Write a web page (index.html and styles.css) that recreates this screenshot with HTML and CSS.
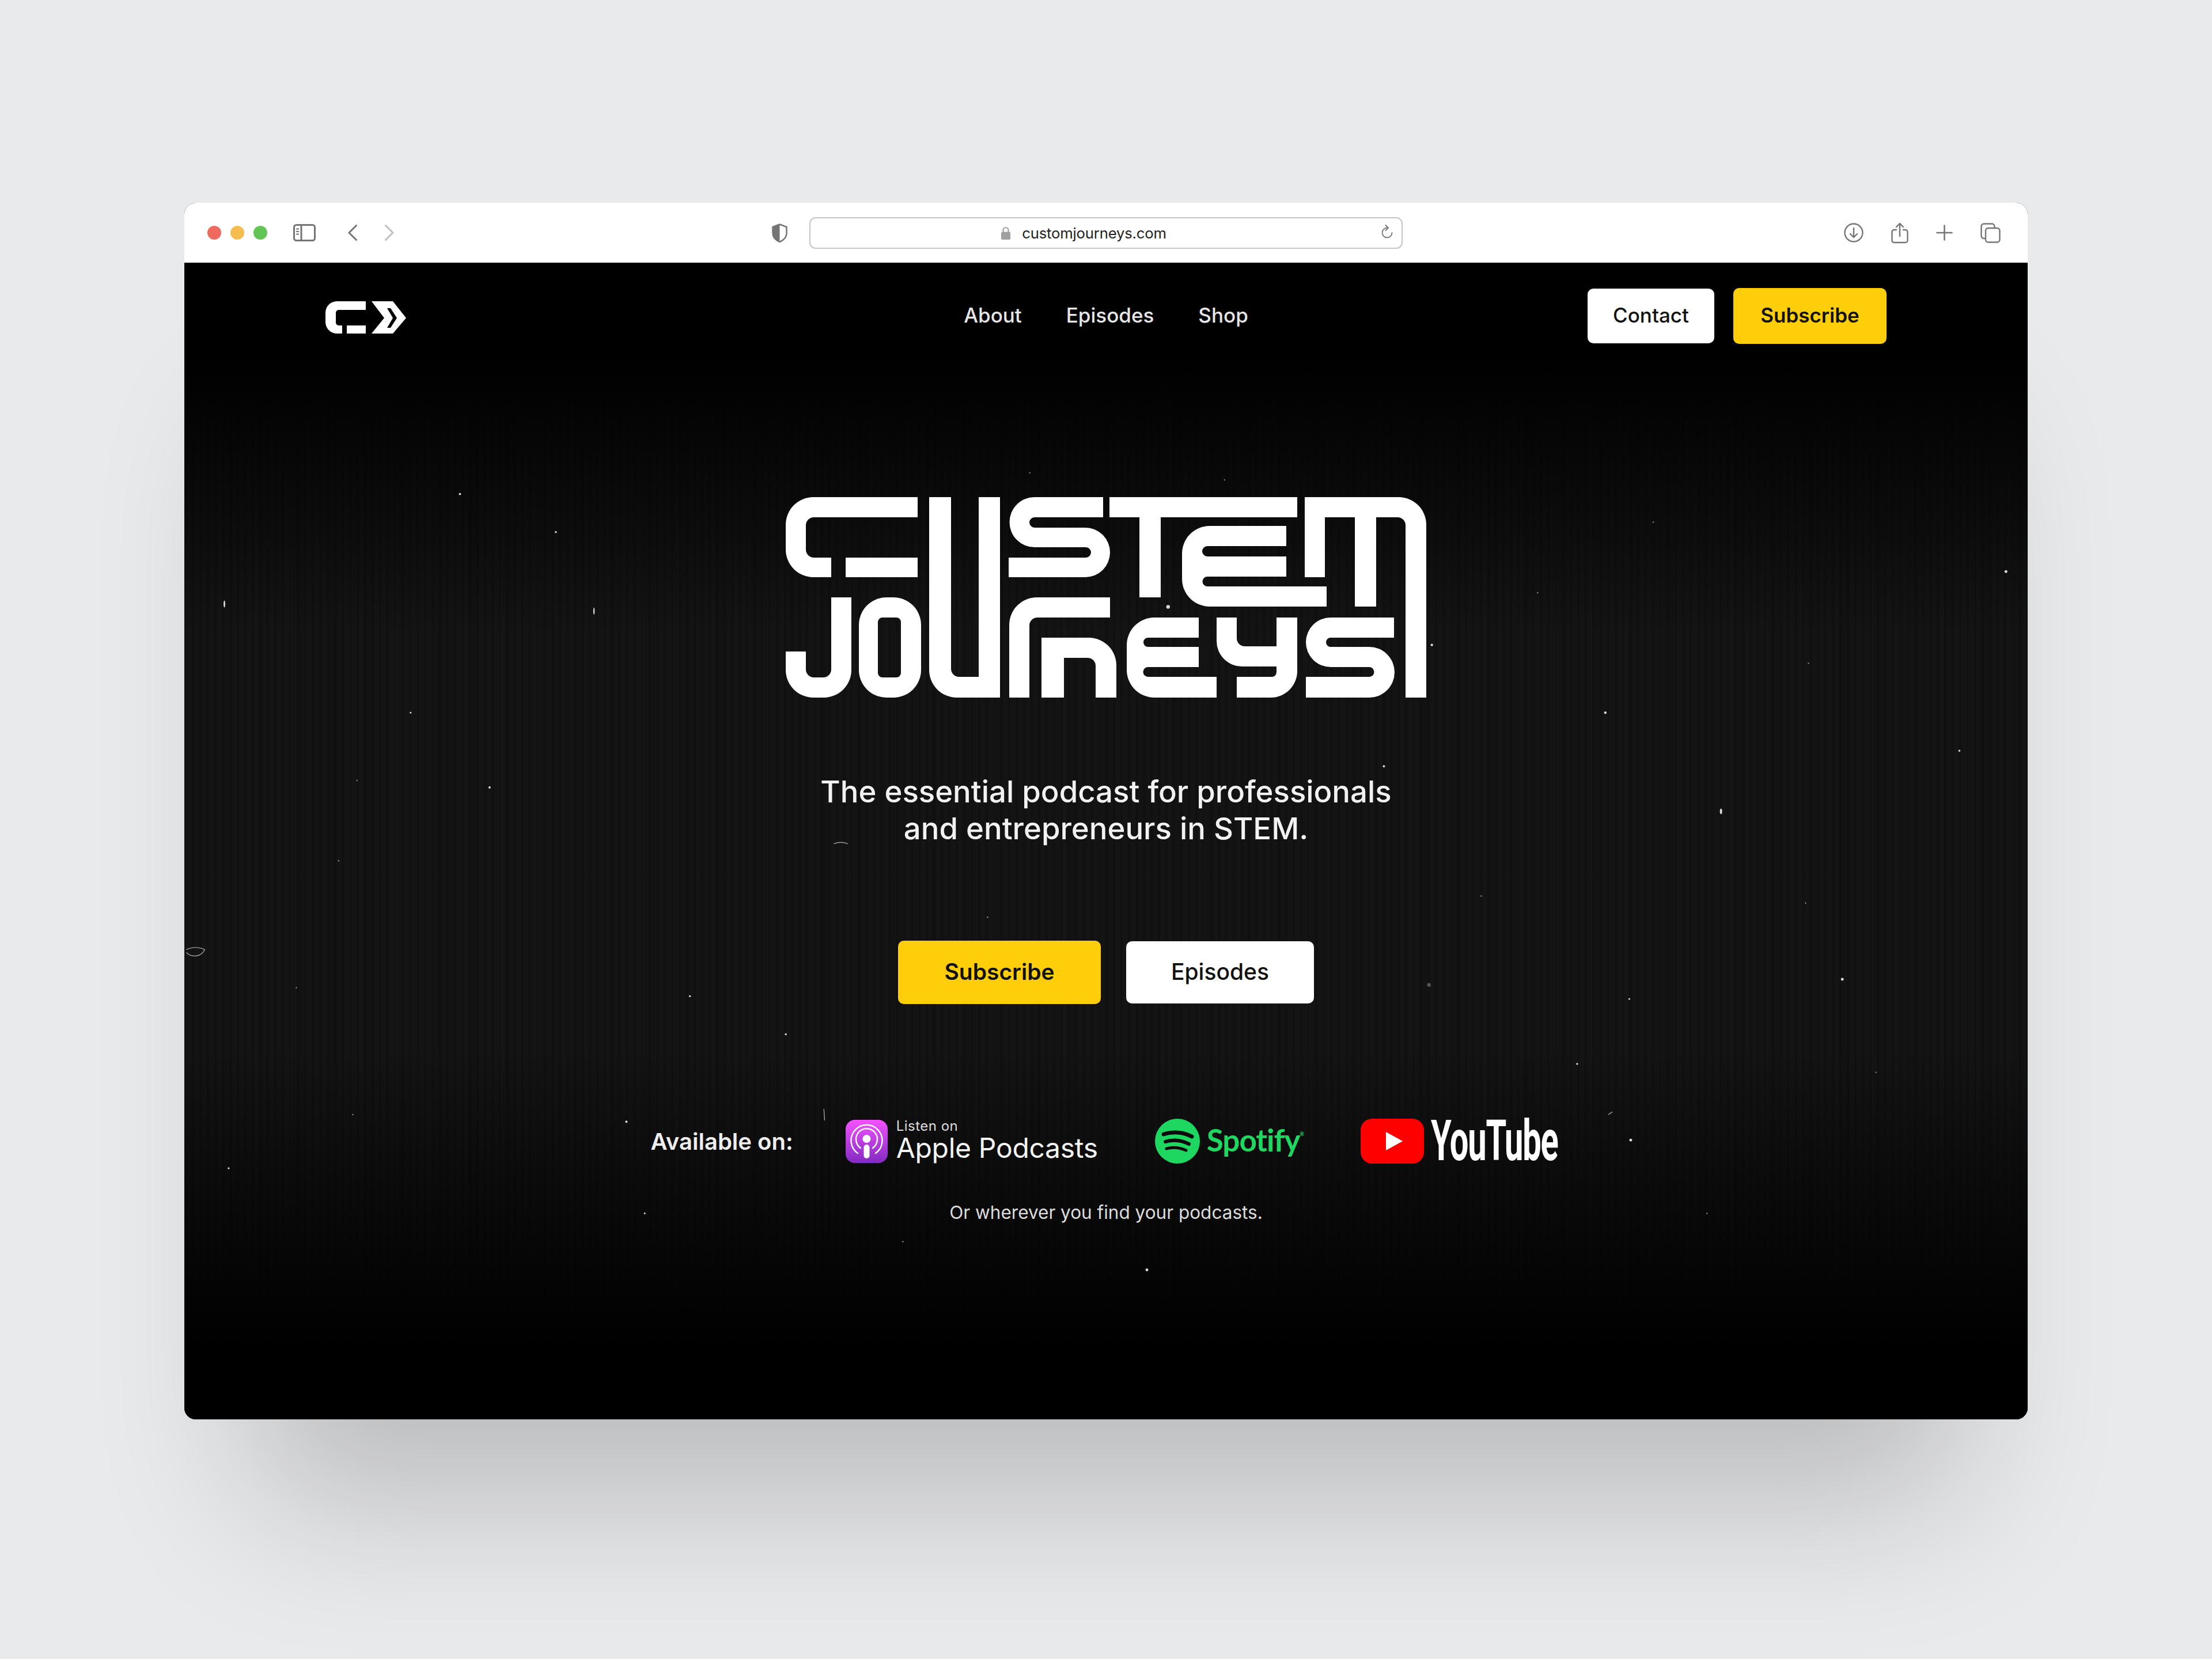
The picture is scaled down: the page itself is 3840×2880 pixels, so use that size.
FILE: index.html
```html
<!DOCTYPE html>
<html lang="en">
<head>
  <meta charset="UTF-8">
  <title>Custom Journeys</title>
  <link rel="stylesheet" href="styles.css">
</head>
<body>
  <div class="window">
    <div class="toolbar">
      <div class="toolbar-left">
        <span class="light red"></span>
        <span class="light yellow"></span>
        <span class="light green"></span>
        <svg class="icon-sidebar" width="39" height="30" viewBox="0 0 39 30" fill="none" stroke="#757575" stroke-width="3">
          <rect x="1.5" y="1.5" width="36" height="27" rx="4"/>
          <path d="M14 2v26"/>
          <path d="M5 8.500h5M5 13h5M5 17.500h5" stroke-width="2"/>
        </svg>
        <svg class="icon-back" width="16" height="28" viewBox="0 0 16 28" fill="none" stroke="#757575" stroke-width="3" stroke-linecap="round" stroke-linejoin="round">
          <path d="M14.500 1.500L2 14l12.500 12.500"/>
        </svg>
        <svg class="icon-forward" width="16" height="28" viewBox="0 0 16 28" fill="none" stroke="#c0c0c0" stroke-width="3" stroke-linecap="round" stroke-linejoin="round">
          <path d="M1.500 1.500L14 14 1.500 26.500"/>
        </svg>
        <svg class="icon-shield" width="27" height="33" viewBox="0 0 27 33">
          <path d="M13.500 1.500L25.500 6v11c0 7-5.500 12-12 15C7 29 1.500 24 1.500 17V6z" fill="#fff" stroke="#757575" stroke-width="2.500" stroke-linejoin="round"/>
          <path d="M13.500 1.500L1.500 6v11c0 7 5.500 12 12 15z" fill="#757575"/>
        </svg>
      </div>
      <div class="address">
        <svg width="18" height="23" viewBox="0 0 18 23" fill="none">
          <path d="M4.500 10V6.500a4.500 4.500 0 0 1 9 0V10" stroke="#a0a0a0" stroke-width="2.200"/>
          <rect x="1" y="9.500" width="16" height="13.500" rx="2" fill="#a0a0a0"/>
        </svg>
        <span class="url">customjourneys.com</span>
        <svg class="icon-reload" width="20" height="26" viewBox="0 0 20 26" fill="none" stroke="#757575" stroke-width="1.800" stroke-linecap="round" stroke-linejoin="round">
          <path d="M11 5.500a8.500 8.500 0 1 0 7.500 8.500"/>
          <path d="M7.500 1L12 5.500 7.500 10"/>
        </svg>
      </div>
      <div class="toolbar-right">
        <svg width="34" height="34" viewBox="0 0 34 34" fill="none" stroke="#757575" stroke-width="2.400" stroke-linecap="round" stroke-linejoin="round">
          <circle cx="17" cy="17" r="15.500"/>
          <path d="M17 9v16M11 19l6 6 6-6"/>
        </svg>
        <svg width="30" height="37" viewBox="0 0 30 37" fill="none" stroke="#757575" stroke-width="2.400" stroke-linecap="round" stroke-linejoin="round">
          <path d="M9 13H5a3.500 3.500 0 0 0-3.500 3.500v15A3.500 3.500 0 0 0 5 35h20a3.500 3.500 0 0 0 3.500-3.500v-15A3.500 3.500 0 0 0 25 13h-4"/>
          <path d="M15 24V2M9 8l6-6 6 6"/>
        </svg>
        <svg width="29" height="28" viewBox="0 0 29 28" fill="none" stroke="#757575" stroke-width="2.600" stroke-linecap="round">
          <path d="M14.500 1.500v25M1.500 14h26"/>
        </svg>
        <svg width="35" height="35" viewBox="0 0 35 35" fill="none" stroke="#757575" stroke-width="2.400">
          <path d="M9 27H6a4.500 4.500 0 0 1-4.500-4.500V6A4.500 4.500 0 0 1 6 1.500h14A4.500 4.500 0 0 1 24.500 6v3"/>
          <rect x="9" y="9" width="24.500" height="24.500" rx="4.500"/>
        </svg>
      </div>
    </div>

    <div class="page">
      <svg class="dust" viewBox="130.600 186 1306.800 820" preserveAspectRatio="none">
        <g fill="#d8d8d8">
          <circle cx="326" cy="350" r=".8"/><circle cx="394" cy="377" r=".7"/><ellipse cx="159" cy="428" rx=".6" ry="2.500"/>
          <ellipse cx="421" cy="433" rx=".5" ry="2.500"/><circle cx="291" cy="505" r=".6"/><circle cx="347" cy="558" r=".8"/>
          <circle cx="1422" cy="405" r="1"/><circle cx="1015" cy="457" r=".9"/><ellipse cx="1220" cy="575" rx=".8" ry="2"/>
          <circle cx="1389" cy="532" r=".7"/><circle cx="1306" cy="694" r="1"/><circle cx="1013" cy="698" r="1.300" fill="#555"/>
          <circle cx="1118" cy="754" r=".7"/><circle cx="1155" cy="708" r=".6"/><circle cx="489" cy="706" r=".7"/>
          <circle cx="557" cy="733" r=".7"/><circle cx="444" cy="795" r=".8"/>
          <circle cx="162" cy="828" r=".7"/><circle cx="457" cy="860" r=".6"/><circle cx="1156" cy="808" r="1"/>
          <circle cx="813" cy="900" r="1"/><circle cx="981" cy="543" r=".8"/>
          <circle cx="1138" cy="505" r=".9"/><circle cx="828" cy="430" r="1.300"/>
        </g>
        <g fill="#8a8a8a">
          <circle cx="868" cy="340" r=".5"/><circle cx="730" cy="335" r=".5"/>
          <circle cx="1172" cy="370" r=".5"/><circle cx="1282" cy="470" r=".5"/>
          <circle cx="700" cy="650" r=".5"/><circle cx="1280" cy="640" r=".5"/><circle cx="253" cy="553" r=".5"/>
          <circle cx="210" cy="700" r=".5"/><circle cx="1330" cy="760" r=".5"/><circle cx="1050" cy="635" r=".5"/>
          <circle cx="250" cy="790" r=".5"/><circle cx="1210" cy="860" r=".5"/><circle cx="640" cy="880" r=".5"/>
          <circle cx="560" cy="480" r=".5"/><circle cx="1090" cy="420" r=".5"/><circle cx="240" cy="610" r=".5"/>
        </g>
        <path d="M132 673c4-2 9-2 13 0c-2 5-9 6-13 2M584 786l.5 8M591 598c3-1.500 7-1.500 10 0M1140 790l3-2" fill="none" stroke="#9a9a9a" stroke-width=".6"/>
      </svg>

      <header class="nav">
        <svg class="nav-logo" role="img" aria-label="Custom Journeys" width="140" height="56" viewBox="13 13 140 56" fill="#fff">
          <path d="M83 13H33a20 20 0 0 0-20 20v16a20 20 0 0 0 20 20h9V55h-6a5 5 0 0 1-5-5V33a5 5 0 0 1 5-5h47z"/>
          <path d="M50 55h33v14H50z"/>
          <path fill-rule="evenodd" d="M93 13h37l23 29-23 27H93l22-27zM120 25l10 17-10 17h6l11-17-11-17z"/>
        </svg>
        <nav class="nav-links">
          <a href="#">About</a>
          <a href="#">Episodes</a>
          <a href="#">Shop</a>
        </nav>
        <div class="nav-actions">
          <a class="btn btn-white nav-contact" href="#">Contact</a>
          <a class="btn btn-yellow nav-subscribe" href="#">Subscribe</a>
        </div>
      </header>

      <main class="hero">
        <svg class="wordmark" role="img" aria-label="Custom Journeys" width="1120" height="365" viewBox="0 0 1120 365" fill="#fff" fill-rule="evenodd">
          <path d="M233 8H52A48 48 0 0 0 4 56v43a48 48 0 0 0 48 48h31v-34H53a14 14 0 0 1-14-14V57a14 14 0 0 1 14-14h180z"/>
          <path d="M108 113h125v34H108z"/>
          <path d="M253 8h38v298a14 14 0 0 0 14 14h34V8h37v348h-75a48 48 0 0 1-48-48z"/>
          <path d="M83 182h35v126a48 48 0 0 1-48 48H52A48 48 0 0 1 4 308v-32h35v31a14 14 0 0 0 14 14h16a14 14 0 0 0 14-14z"/>
          <path d="M179 182h12a48 48 0 0 1 48 48v78a48 48 0 0 1-48 48h-12a48 48 0 0 1-48-48v-78a48 48 0 0 1 48-48zM172 217a8 8 0 0 0-8 8v88a8 8 0 0 0 8 8h24a8 8 0 0 0 8-8v-88a8 8 0 0 0-8-8z"/>
          <path d="M555 8H436a43.500 43.500 0 0 0 0 87h89a9 9 0 0 1 0 18H391v34h133a43 43 0 0 0 0-86h-88a9 9 0 0 1 0-18h119z"/>
          <path d="M566 8h326v35H655v139h-37V43h-52z"/>
          <path d="M873 58H740a48 48 0 0 0-48 48v44a48 48 0 0 0 48 48h203v-35H736a8.500 8.500 0 0 1 0-17h137v-35H736a9 9 0 0 1 0-18h137z"/>
          <path d="M905 8h163a48 48 0 0 1 48 48v300h-36V57a14 14 0 0 0-14-14h-37v155h-37V43h-52v104h-35z"/>
          <path d="M567 182H440a48 48 0 0 0-48 48v126h35V231a14 14 0 0 1 14-14h126z"/>
          <path d="M448 252h82a48 48 0 0 1 48 48v56h-36v-55a14 14 0 0 0-14-14h-41v69h-39z"/>
          <path d="M721 217h-77a48 48 0 0 0-48 48v43a48 48 0 0 0 48 48h108v-36H633a8.500 8.500 0 0 1 0-17h88v-35h-88a8 8 0 0 1 0-16h88z"/>
          <path d="M752 217h35v36a14 14 0 0 0 14 14h55v-50h36v93a46 46 0 0 1-46 46h-59v-36h61a8 8 0 0 0 8-8v-10h-60a44 44 0 0 1-44-44z"/>
          <path d="M1060 217H950a43 43 0 0 0 0 86h67a8.500 8.500 0 0 1 0 17H907v36h110a44 44 0 0 0 0-88h-67a8 8 0 0 1 0-16h110z"/>
        </svg>

        <p class="tagline">The essential podcast for professionals<br>and entrepreneurs in STEM.</p>

        <div class="hero-actions">
          <a class="btn btn-yellow hero-subscribe" href="#">Subscribe</a>
          <a class="btn btn-white hero-episodes" href="#">Episodes</a>
        </div>

        <div class="platforms">
          <span class="platforms-label">Available on:</span>

          <a class="apple" href="#">
            <svg width="73" height="75" viewBox="0 0 73 75">
              <defs>
                <linearGradient id="applePurple" x1="0" y1="0" x2="0" y2="1">
                  <stop offset="0" stop-color="#f452ff"/>
                  <stop offset="1" stop-color="#832bc1"/>
                </linearGradient>
              </defs>
              <rect width="73" height="75" rx="16" fill="url(#applePurple)"/>
              <g fill="none" stroke="#fff" stroke-width="2.400" stroke-linecap="round">
                <path d="M21 58A27 27 0 1 1 52 58"/>
                <path d="M26 49A18.500 18.500 0 1 1 47 49"/>
              </g>
              <circle cx="36.500" cy="33" r="7" fill="#fff"/>
              <rect x="31.500" y="43" width="10" height="24" rx="5" fill="#fff"/>
            </svg>
            <span class="apple-text">
              <span class="apple-small">Listen on</span>
              <span class="apple-big">Apple Podcasts</span>
            </span>
          </a>

          <a class="spotify" href="#">
            <svg width="78" height="78" viewBox="0 0 78 78">
              <circle cx="39" cy="39" r="39" fill="#1ed760"/>
              <g fill="none" stroke="#0b0b0b" stroke-linecap="round">
                <path d="M15 27c16-5 34-4 49 4" stroke-width="7"/>
                <path d="M18 40c14-4 28-3 41 4" stroke-width="6"/>
                <path d="M20 52c11-3 23-2 34 3" stroke-width="5"/>
              </g>
            </svg>
            <span class="spotify-text">Spotify<span class="spotify-mark">®</span></span>
          </a>

          <a class="youtube" href="#">
            <svg width="110" height="78" viewBox="0 0 110 78">
              <rect width="110" height="78" rx="20" fill="#f00"/>
              <path d="M44 23l29 16-29 16z" fill="#fff"/>
            </svg>
            <span class="youtube-text">YouTube</span>
          </a>
        </div>

        <p class="footnote">Or wherever you find your podcasts.</p>
      </main>
    </div>
  </div>
</body>
</html>
```

FILE: styles.css
```css
/* Estilos de la captura */
body {
  margin: 0;
  height: 2880px;
  padding-top: 352px;
  box-sizing: border-box;
  background-color: #e9eaec;
  font-family: Inter, "Liberation Sans", sans-serif;
  overflow: hidden;
}

a {
  text-decoration: none;
  color: inherit;
}

svg {
  display: block;
  flex: none;
}

.window {
  width: 3200px;
  height: 2112px;
  margin: 0 auto;
  border-radius: 20px;
  background-color: #000;
  box-shadow: 0 260px 500px -120px rgba(0, 0, 0, 0.2);
  display: flex;
  flex-direction: column;
}

/* Barra del navegador */
.toolbar {
  height: 104px;
  flex: none;
  display: flex;
  align-items: center;
  background-color: #fff;
  border-radius: 20px 20px 0 0;
}

.toolbar-left,
.toolbar-right {
  flex: 0 0 1085px;
  box-sizing: border-box;
  display: flex;
  align-items: center;
}

.toolbar-left {
  padding-left: 40px;
}

.toolbar-right {
  justify-content: flex-end;
  gap: 48px;
  padding-right: 47px;
}

.light {
  width: 24px;
  height: 24px;
  border-radius: 50%;
  margin-right: 16px;
}

.red { background-color: #ee6a5f; }
.yellow { background-color: #f5bd4f; }
.green { background-color: #61c454; }

.icon-sidebar { margin-left: 29px; }
.icon-back { margin-left: 56px; }
.icon-forward { margin-left: 48px; }

.icon-shield {
  margin-left: auto;
  margin-right: 38px;
}

.address {
  position: relative;
  width: 1030px;
  height: 55px;
  box-sizing: border-box;
  flex: none;
  display: flex;
  align-items: center;
  justify-content: center;
  gap: 19px;
  padding-right: 78px;
  border: 2.5px solid #c6c6c6;
  border-radius: 11px;
}

.url {
  font-size: 25.7px;
  color: #222;
  letter-spacing: -0.2px;
}

.icon-reload {
  position: absolute;
  right: 15px;
  top: 11px;
}

/* Pagina */
.page {
  position: relative;
  flex: 1;
  overflow: hidden;
  border-radius: 0 0 20px 20px;
  background:
    linear-gradient(to bottom, #000 0, #000 8%, rgba(0, 0, 0, 0) 32%, rgba(0, 0, 0, 0) 68%, #000 94%),
    repeating-linear-gradient(90deg, rgba(255, 255, 255, 0.006) 0, rgba(255, 255, 255, 0.006) 5px, rgba(0, 0, 0, 0.025) 5px, rgba(0, 0, 0, 0.025) 23px, rgba(255, 255, 255, 0.005) 23px, rgba(255, 255, 255, 0.005) 61px),
    repeating-linear-gradient(90deg, rgba(0, 0, 0, 0.05) 0, rgba(0, 0, 0, 0.05) 4px, rgba(255, 255, 255, 0.008) 4px, rgba(255, 255, 255, 0.008) 13px),
    #111;
}

.dust {
  position: absolute;
  left: 0;
  top: 0;
  width: 100%;
  height: 100%;
}

.nav {
  position: relative;
  display: grid;
  grid-template-columns: 1fr auto 1fr;
  align-items: center;
  padding: 44px 245px 0;
}

.nav-logo {
  margin-top: 5px;
}

.nav-links {
  display: flex;
  gap: 77px;
  font-size: 35px;
  font-weight: 500;
  color: #e6e6e6;
  margin-top: -3px;
}

.nav-actions {
  display: flex;
  align-items: center;
  justify-content: flex-end;
  gap: 33px;
}

.btn {
  display: flex;
  align-items: center;
  justify-content: center;
  border-radius: 10px;
  box-sizing: border-box;
  padding-bottom: 3px;
  color: #111;
  font-weight: 500;
}

.btn-white {
  background-color: #fff;
}

.btn-yellow {
  background-color: #ffce0a;
  font-weight: 600;
}

.nav-contact {
  width: 220px;
  height: 95px;
  font-size: 35px;
}

.nav-subscribe {
  width: 266px;
  height: 97px;
  font-size: 35px;
}

.hero {
  position: relative;
  display: flex;
  flex-direction: column;
  align-items: center;
}

.wordmark {
  margin-top: 258px;
}

.tagline {
  margin: 122px 0 0;
  font-size: 52.7px;
  line-height: 64px;
  font-weight: 500;
  text-align: center;
  color: #f2f2f2;
}

.hero-actions {
  display: flex;
  align-items: center;
  gap: 44px;
  margin-top: 163px;
}

.hero-subscribe {
  width: 352px;
  height: 110px;
  font-size: 39px;
}

.hero-episodes {
  width: 326px;
  height: 108px;
  font-size: 39px;
}

.platforms {
  display: flex;
  align-items: center;
  height: 80px;
  margin-top: 198px;
  color: #fff;
}

.platforms-label {
  font-size: 40px;
  font-weight: 600;
  color: #eee;
}

.apple {
  display: flex;
  align-items: center;
  gap: 15px;
  margin-left: 91px;
}

.apple-text {
  display: flex;
  flex-direction: column;
}

.apple-small {
  font-size: 24px;
  line-height: 24px;
  color: #ddd;
  letter-spacing: 0.5px;
}

.apple-big {
  font-size: 48px;
  line-height: 52px;
  color: #f4f4f4;
  letter-spacing: -0.3px;
}

.spotify {
  display: flex;
  align-items: center;
  gap: 12px;
  margin-left: 99px;
}

.spotify-text {
  position: relative;
  padding-bottom: 6px;
  font-family: Lato, Inter, sans-serif;
  font-size: 53px;
  font-weight: 700;
  letter-spacing: -1px;
  color: #1ed760;
}

.spotify-mark {
  position: absolute;
  left: 100%;
  top: 16px;
  font-size: 9px;
  letter-spacing: 0;
}

.youtube {
  display: flex;
  align-items: center;
  gap: 12px;
  margin-left: 105px;
}

.youtube-text {
  display: block;
  width: 227px;
  font-family: Roboto, sans-serif;
  font-size: 98px;
  line-height: 80px;
  font-weight: 700;
  letter-spacing: -2px;
  white-space: nowrap;
  transform: scaleX(0.59);
  transform-origin: left center;
  color: #fff;
}

.footnote {
  margin: 64px 0 0;
  font-size: 31.5px;
  line-height: 40px;
  color: #dcdcdc;
}
```
